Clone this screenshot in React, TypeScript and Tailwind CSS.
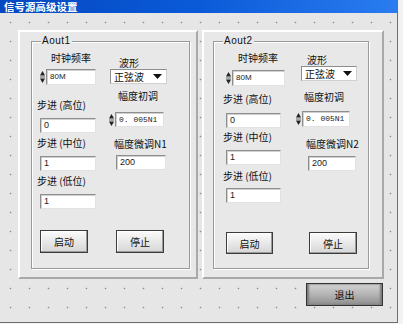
import React from 'react';

const cjk = { fontFamily: '"Noto Sans CJK SC", "Liberation Sans", sans-serif' };
const mono = { fontFamily: '"Liberation Mono", "DejaVu Sans Mono", monospace' };
const sans = { fontFamily: '"Liberation Sans", Arial, sans-serif' };

function Label({ className = '', children }: { className?: string; children: React.ReactNode }) {
  return (
    <div className={`text-[10px] leading-[12px] whitespace-nowrap text-[#111] ${className}`} style={cjk}>
      {children}
    </div>
  );
}

function TextBox({ className = '', value, small }: { className?: string; value: string; small?: boolean }) {
  return (
    <div
      className={`flex items-center bg-white pl-[3px] text-[#222] border border-t-[#8e8e8e] border-l-[#8e8e8e] border-r-[#e2e2e2] border-b-[#e2e2e2] shadow-[inset_1px_1px_0_#d0d0d0] ${small ? 'text-[8px]' : 'text-[9px]'} ${className}`}
      style={small ? mono : sans}
    >
      {value}
    </div>
  );
}

function Spinner() {
  return (
    <svg width="5" height="14" viewBox="0 0 5 14" className="shrink-0">
      <rect x="0" y="0" width="5" height="14" fill="#e8e8e8" />
      <path d="M2.5 1 L5 5.5 L0 5.5 Z" fill="#222" />
      <rect x="0" y="6.5" width="5" height="1" fill="#666" />
      <path d="M0 8.5 L5 8.5 L2.5 13 Z" fill="#222" />
    </svg>
  );
}

function SpinBox({ className = '', inputClass, value, small }: { className?: string; inputClass: string; value: string; small?: boolean }) {
  return (
    <div className={`flex items-center gap-[1px] ${className}`}>
      <Spinner />
      <TextBox className={inputClass} value={value} small={small} />
    </div>
  );
}

function Dropdown({ className = '' }: { className?: string }) {
  return (
    <div
      className={`flex items-center justify-between bg-white pl-[3px] pr-[4px] border border-t-[#8e8e8e] border-l-[#8e8e8e] border-r-[#d0d0d0] border-b-[#d0d0d0] ${className}`}
    >
      <span className="text-[10px] leading-[12px] text-[#111]" style={cjk}>
        正弦波
      </span>
      <svg width="9" height="5" viewBox="0 0 9 5">
        <path d="M0 0 L9 0 L4.5 5 Z" fill="#111" />
      </svg>
    </div>
  );
}

function Btn({ className = '', children }: { className?: string; children: React.ReactNode }) {
  return (
    <div
      className={`flex items-center justify-center border border-[#3c3c3c] bg-gradient-to-b from-[#fbfbfb] to-[#d6d6d6] shadow-[inset_-1px_-1px_0_#9a9a9a,inset_1px_1px_0_#ffffff] text-[10px] text-[#111] ${className}`}
      style={cjk}
    >
      {children}
    </div>
  );
}

function GroupBox({ title, className = '', children }: { title: string; className?: string; children: React.ReactNode }) {
  return (
    <div
      className={`relative flex flex-col border border-[#9a9a9a] shadow-[inset_1px_1px_0_#ffffff,1px_1px_0_#ffffff] ${className}`}
    >
      <span
        className="absolute -top-[7px] left-[9px] bg-[#e8e8e8] px-[1px] text-[10px] leading-[12px] tracking-[0.5px] text-[#111]"
        style={sans}
      >
        {title}
      </span>
      {children}
    </div>
  );
}

function PanelOne() {
  return (
    <div className="h-[249px] w-[180px] border-2 border-t-white border-l-white border-r-[#a9a9a9] border-b-[#a9a9a9] bg-[#e8e8e8] pl-[11px] pt-[9px]">
      <GroupBox title="Aout1" className="h-[228px] w-[159px]">
        <div className="flex">
          <div className="flex w-[77px] flex-col">
            <Label className="ml-[19px] mt-[10px]">时钟频率</Label>
            <SpinBox className="ml-[8px] mt-[5px]" inputClass="h-[16px] w-[50px] !text-[8px]" value="80M" />
            <Label className="ml-[5px] mt-[14px]">步进 (高位)</Label>
            <TextBox className="ml-[8px] mt-[7px] h-[15px] w-[56px]" value="0" />
            <Label className="ml-[5px] mt-[4px]">步进 (中位)</Label>
            <TextBox className="ml-[8px] mt-[7px] h-[15px] w-[56px]" value="1" />
            <Label className="ml-[5px] mt-[4px]">步进 (低位)</Label>
            <TextBox className="ml-[8px] mt-[7px] h-[15px] w-[56px]" value="1" />
          </div>
          <div className="flex flex-col">
            <Label className="ml-[10px] mt-[15px]">波形</Label>
            <Dropdown className="ml-[1px] h-[15px] w-[57px]" />
            <Label className="ml-[9px] mt-[6px]">幅度初调</Label>
            <SpinBox className="mt-[10px]" inputClass="h-[15px] w-[49px]" value="0. 005N1" small />
            <Label className="ml-[5px] mt-[11px]">幅度微调N1</Label>
            <TextBox className="ml-[7px] mt-[5px] h-[15px] w-[50px]" value="200" />
          </div>
        </div>
        <div className="mt-[21px] flex">
          <Btn className="ml-[8px] h-[23px] w-[48px]">启动</Btn>
          <Btn className="ml-[28px] h-[23px] w-[48px]">停止</Btn>
        </div>
      </GroupBox>
    </div>
  );
}

function PanelTwo() {
  return (
    <div className="h-[249px] w-[182px] border-2 border-t-white border-l-white border-r-[#a9a9a9] border-b-[#a9a9a9] bg-[#e8e8e8] pl-[9px] pt-[9px]">
      <GroupBox title="Aout2" className="h-[228px] w-[156px]">
        <div className="flex">
          <div className="flex w-[80px] flex-col">
            <Label className="ml-[24px] mt-[10px]">时钟频率</Label>
            <SpinBox className="ml-[12px] mt-[6px]" inputClass="h-[16px] w-[53px] !text-[8px]" value="80M" />
            <Label className="ml-[9px] mt-[7px]">步进 (高位)</Label>
            <TextBox className="ml-[12px] mt-[8px] h-[15px] w-[55px]" value="0" />
            <Label className="ml-[9px] mt-[3px]">步进 (中位)</Label>
            <TextBox className="ml-[12px] mt-[7px] h-[15px] w-[55px]" value="1" />
            <Label className="ml-[9px] mt-[5px]">步进 (低位)</Label>
            <TextBox className="ml-[12px] mt-[6px] h-[15px] w-[55px]" value="1" />
          </div>
          <div className="flex flex-col">
            <Label className="ml-[13px] mt-[12px]">波形</Label>
            <Dropdown className="ml-[7px] h-[15px] w-[56px]" />
            <Label className="ml-[10px] mt-[10px]">幅度初调</Label>
            <SpinBox className="ml-[2px] mt-[8px]" inputClass="h-[16px] w-[48px]" value="0. 005N1" small />
            <Label className="ml-[12px] mt-[11px]">幅度微调N2</Label>
            <TextBox className="ml-[14px] mt-[6px] h-[15px] w-[48px]" value="200" />
          </div>
        </div>
        <div className="mt-[29px] flex">
          <Btn className="ml-[12px] h-[22px] w-[47px]">启动</Btn>
          <Btn className="ml-[36px] h-[22px] w-[48px]">停止</Btn>
        </div>
      </GroupBox>
    </div>
  );
}

export default function App() {
  return (
    <div className="h-[324px] w-[403px] overflow-hidden bg-[#f2f2f2]">
      <div className="flex h-[323px] w-[398px] flex-col border-b border-r border-[#6f6f6f] bg-[#e6e6e6] bg-[radial-gradient(circle,#8f8f8f_0.7px,transparent_1.1px)] bg-[length:19px_19px] bg-[position:1px_13px]">
        {/* title bar */}
        <div className="flex h-[13px] items-center bg-gradient-to-r from-[#0648c0] via-[#0a5ad8] to-[#2a7cf0] pl-[4px]">
          <span className="text-[10.5px] font-bold leading-[13px] text-white" style={cjk}>
            信号源高级设置
          </span>
        </div>

        <div className="flex flex-col pl-[18px] pt-[17px]">
          <div className="flex gap-[4px]">
            <PanelOne />
            <PanelTwo />
          </div>
          <div className="ml-[288px] mt-[4px]">
            <div
              className="flex h-[23px] w-[77px] items-center justify-center border border-[#333] bg-gradient-to-b from-[#d4d4d4] via-[#b4b4b4] to-[#8e8e8e] shadow-[inset_2px_0_2px_#7a7a7a,inset_-2px_0_2px_#7a7a7a] text-[10px] text-[#111]"
              style={cjk}
            >
              退出
            </div>
          </div>
        </div>
      </div>
    </div>
  );
}
